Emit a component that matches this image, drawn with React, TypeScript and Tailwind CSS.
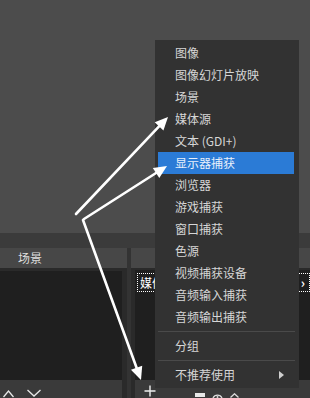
import React from 'react';

const cjk = "font-['Noto_Sans_CJK_SC','Noto_Sans',sans-serif]";

type Entry = { label?: string; sep?: boolean; active?: boolean; sub?: boolean };

const menuItems: Entry[] = [
  { label: '图像' },
  { label: '图像幻灯片放映' },
  { label: '场景' },
  { label: '媒体源' },
  { label: '文本 (GDI+)' },
  { label: '显示器捕获', active: true },
  { label: '浏览器' },
  { label: '游戏捕获' },
  { label: '窗口捕获' },
  { label: '色源' },
  { label: '视频捕获设备' },
  { label: '音频输入捕获' },
  { label: '音频输出捕获' },
  { sep: true },
  { label: '分组' },
  { sep: true },
  { label: '不推荐使用', sub: true },
];

// arrow from (x1,y1) with its head tip at (x2,y2)
const Arrow = ({ x1, y1, x2, y2 }: { x1: number; y1: number; x2: number; y2: number }) => {
  const len = Math.hypot(x2 - x1, y2 - y1);
  const dx = (x2 - x1) / len;
  const dy = (y2 - y1) / len;
  const hl = 13;
  const hw = 6;
  const bx = x2 - dx * hl;
  const by = y2 - dy * hl;
  const pts = `${x2},${y2} ${bx - dy * hw},${by + dx * hw} ${bx + dy * hw},${by - dx * hw}`;
  return (
    <g>
      <line x1={x1} y1={y1} x2={bx} y2={by} stroke="white" strokeWidth={2.6} strokeLinecap="round" />
      <polygon points={pts} fill="white" />
    </g>
  );
};

const ContextMenu = () => (
  <div className={`absolute left-[155px] top-[40px] w-[144px] bg-[#323232] pt-[2px] pb-[2px] ${cjk}`}>
    {menuItems.map((item, i) =>
      item.sep ? (
        <div key={i} className="ml-[3px] mr-[4px] my-[3px] h-px bg-[#4a4a4a]" />
      ) : (
        <div
          key={i}
          className={`ml-[3px] mr-[5px] h-[22px] flex items-center justify-between pl-[17px] pr-[10px] text-[12px] leading-none ${
            item.active ? 'bg-[#2b7bd6] text-[#e8f0fb]' : 'text-[#d6d6d6]'
          }`}
        >
          <span>{item.label}</span>
          {item.sub && (
            <svg width="5" height="8" viewBox="0 0 5 8">
              <polygon points="0,0 5,4 0,8" fill="#cfcfcf" />
            </svg>
          )}
        </div>
      )
    )}
  </div>
);

export default function App() {
  return (
    <div className={`relative w-[310px] h-[398px] overflow-hidden bg-[#4c4c4c] ${cjk}`}>
      <div className="flex flex-col h-full">
        {/* preview */}
        <div className="h-[233px] bg-[#4c4c4c]" />
        <div className="h-[15px] bg-[#3b3b3b]" />

        {/* docks */}
        <div className="flex flex-1 bg-[#383838]">
          {/* scenes */}
          <div className="w-[127px] flex flex-col">
            <div className="h-[20px] bg-[#474747] flex items-center pl-[18px] text-[12px] text-[#dedede]">场景</div>
            <div className="flex-1 flex flex-col bg-[#2a2a2a] pt-[3px] pr-[5px]">
              <div className="flex-1 bg-[#1f1f1f]" />
              <div className="h-[18px] bg-[#3a3a3a] flex items-end gap-[13px] pl-[3px]">
                <svg width="11" height="9" viewBox="0 0 11 9">
                  <polyline points="0.5,8 5.5,2 10.5,8" fill="none" stroke="#e8e8e8" strokeWidth="1.3" />
                </svg>
                <svg width="14" height="11" viewBox="0 0 14 11">
                  <polyline points="0.5,3 7,9 13.5,3" fill="none" stroke="#e8e8e8" strokeWidth="1.3" />
                </svg>
              </div>
            </div>
          </div>

          <div className="w-[4px] bg-[#333333]" />

          {/* sources */}
          <div className="flex-1 flex flex-col">
            <div className="h-[20px] bg-[#474747]" />
            <div className="flex-1 flex flex-col bg-[#2a2a2a] pt-[2px] pl-[4px]">
              <div className="flex-1 bg-[#1f1f1f] pt-[3px] pl-[2px]">
                <div className="h-[19px] border border-dotted border-white flex items-center pl-[2px] justify-between text-[12px] text-white">
                  <span>媒体源</span>
                  <span className="mr-[4px] text-[13px] font-bold">›</span>
                </div>
              </div>
              <div className="h-[18px] bg-[#3a3a3a] flex items-start pl-[9px] pt-[5px]">
                <svg width="12" height="12" viewBox="0 0 12 12">
                  <path d="M6 0.5V11.5M0.5 6H11.5" stroke="#eeeeee" strokeWidth="1.4" />
                </svg>
                <div className="ml-[39px] mt-[8px] w-[10px] h-[4px] bg-[#e8e8e8]" />
                <svg className="ml-[6px] mt-[7px]" width="13" height="6" viewBox="0 0 13 6">
                  <path d="M2 6A5 5 0 0 1 11 6" fill="none" stroke="#dddddd" strokeWidth="1.3" />
                  <circle cx="6.5" cy="5" r="1" fill="#dddddd" />
                </svg>
                <svg className="ml-[6px] mt-[8px]" width="9" height="5" viewBox="0 0 9 5">
                  <polyline points="0.5,4.5 4.5,0.8 8.5,4.5" fill="none" stroke="#dddddd" strokeWidth="1.3" />
                </svg>
              </div>
            </div>
          </div>
        </div>
      </div>

      <ContextMenu />

      <svg className="absolute inset-0 pointer-events-none" width="310" height="398">
        <Arrow x1={76} y1={214} x2={168} y2={117} />
        <Arrow x1={84} y1={219} x2={167} y2={166} />
        <Arrow x1={83} y1={220} x2={141} y2={380} />
      </svg>
    </div>
  );
}
